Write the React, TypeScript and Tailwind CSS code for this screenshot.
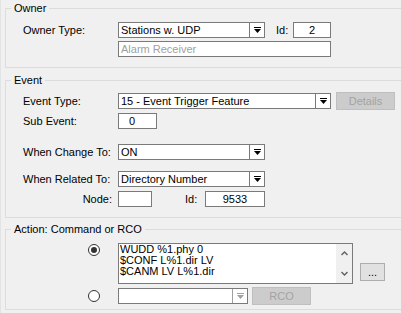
import React from "react";

function Arrow({ disabled }: { disabled?: boolean }) {
  return (
    <svg width="7" height="6" viewBox="0 0 7 6" className={disabled ? "fill-[#a0a0a0]" : "fill-black"}>
      <path d="M0 0h7v1H0z M0 2h7L3.5 6z" />
    </svg>
  );
}

function Combo({ w, text, disabled }: { w: string; text: string; disabled?: boolean }) {
  return (
    <div className={`flex h-[16px] border border-[#7a7a7a] bg-white ${w}`}>
      <div className="flex-1 overflow-hidden whitespace-nowrap pl-[2px] leading-[14px]">{text}</div>
      <div className={`flex w-[15px] items-center justify-center border-l ${disabled ? "border-[#a0a0a0]" : "border-[#7a7a7a]"}`}>
        <Arrow disabled={disabled} />
      </div>
    </div>
  );
}

function Box({ w, children, className = "" }: { w: string; children?: React.ReactNode; className?: string }) {
  return (
    <div className={`h-[16px] border border-[#7a7a7a] bg-white leading-[14px] whitespace-nowrap ${w} ${className}`}>{children}</div>
  );
}

function Group({ title, cls, children }: { title: string; cls: string; children?: React.ReactNode }) {
  return (
    <div className={`relative w-[400px] shrink-0 border border-[#dcdcdc] ${cls}`}>
      <span className="absolute left-[5px] top-[-7px] bg-[#f0f0f0] px-[3px] leading-[13px]">{title}</span>
      {children}
    </div>
  );
}

function Radio({ checked }: { checked?: boolean }) {
  return (
    <div className="flex h-[12px] w-[12px] items-center justify-center rounded-full border border-[#333333] bg-white">
      {checked && <div className="h-[6px] w-[6px] rounded-full bg-[#333333]" />}
    </div>
  );
}

function DisabledButton({ label }: { label: string }) {
  return (
    <div className="flex h-[18px] w-[59px] items-center justify-center border border-[#bfbfbf] bg-[#cccccc] text-[#a3a3a3]">
      {label}
    </div>
  );
}

export default function App() {
  return (
    <div className="flex h-[313px] w-[401px] flex-col overflow-hidden border-l border-[#e3e3e3] bg-[#f0f0f0] pl-[4px] pt-[8px] font-['Liberation_Sans',Arial,sans-serif] text-[11px] text-black">
      <Group title="Owner" cls="h-[60px]">
        <div className="mt-[13px] flex h-[16px] items-center pl-[17px]">
          <div className="w-[95px]">Owner Type:</div>
          <Combo w="w-[147px]" text="Stations w. UDP" />
          <div className="ml-[11px] w-[17px]">Id:</div>
          <Box w="w-[38px]" className="text-center">2</Box>
        </div>
        <div className="mt-[3px] pl-[112px]">
          <Box w="w-[213px]" className="pl-[2px] text-[#a0a0a0]">Alarm Receiver</Box>
        </div>
      </Group>

      <Group title="Event" cls="mt-[12px] h-[138px]">
        <div className="mt-[11px] flex h-[18px] items-center pl-[17px]">
          <div className="w-[95px]">Event Type:</div>
          <Combo w="w-[213px]" text="15 - Event Trigger Feature" />
          <div className="ml-[5px]">
            <DisabledButton label="Details" />
          </div>
        </div>
        <div className="mt-[3px] flex h-[16px] items-center pl-[17px]">
          <div className="w-[95px]">Sub Event:</div>
          <Box w="w-[39px]" className="pl-[10px]">0</Box>
        </div>
        <div className="mt-[15px] flex h-[16px] items-center pl-[17px]">
          <div className="w-[95px]">When Change To:</div>
          <Combo w="w-[147px]" text="ON" />
        </div>
        <div className="mt-[11px] flex h-[16px] items-center pl-[17px]">
          <div className="w-[95px]">When Related To:</div>
          <Combo w="w-[147px]" text="Directory Number" />
        </div>
        <div className="mt-[4px] flex h-[16px] items-center pl-[17px]">
          <div className="w-[95px] pr-[6px] text-right">Node:</div>
          <Box w="w-[34px]" />
          <div className="ml-[33px] w-[20px]">Id:</div>
          <Box w="w-[60px]" className="text-center">9533</Box>
        </div>
      </Group>

      <Group title="Action: Command or RCO" cls="mt-[11px] h-[81px]">
        <div className="mt-[13px] flex items-start pl-[82px]">
          <div className="mt-[1px]">
            <Radio checked />
          </div>
          <div className="ml-[18px] flex h-[41px] w-[235px] border border-[#7a7a7a] bg-white">
            <div className="flex-1 whitespace-nowrap pl-[1px] leading-[11px]">
              <div>WUDD %1.phy 0</div>
              <div>$CONF L%1.dir LV</div>
              <div>$CANM LV L%1.dir</div>
            </div>
            <div className="flex w-[16px] flex-col items-center justify-between bg-[#f0f0f0] py-[7px]">
              <svg width="7" height="5" viewBox="0 0 7 5" className="fill-none stroke-[#606060]" strokeWidth="1.4">
                <path d="M0.5 4L3.5 1L6.5 4" />
              </svg>
              <svg width="7" height="5" viewBox="0 0 7 5" className="fill-none stroke-[#606060]" strokeWidth="1.4">
                <path d="M0.5 1L3.5 4L6.5 1" />
              </svg>
            </div>
          </div>
          <div className="ml-[7px] mt-[20px] flex h-[18px] w-[25px] items-center justify-center border border-[#adadad] bg-[#e1e1e1] leading-[10px]">
            ...
          </div>
        </div>
        <div className="mt-[3px] flex h-[18px] items-center pl-[82px]">
          <Radio />
          <div className="ml-[18px]">
            <Combo w="w-[130px]" text="" disabled />
          </div>
          <div className="ml-[4px]">
            <DisabledButton label="RCO" />
          </div>
        </div>
      </Group>
    </div>
  );
}
